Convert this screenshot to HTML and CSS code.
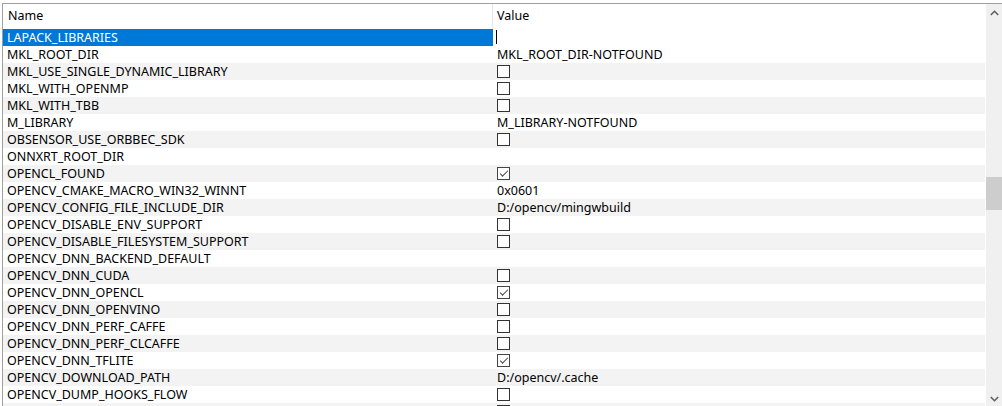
FILE: index.html
```html
<!DOCTYPE html>
<html>
<head>
<meta charset="utf-8">
<link rel="stylesheet" href="styles.css">
</head>
<body>
<div class="frame">
  <div class="table">
    <div class="header">
      <div class="hname">Name</div>
      <div class="hvalue">Value</div>
    </div>
    <div class="rows">
      <div class="row sel"><div class="name">LAPACK_LIBRARIES</div><div class="value"><span class="caret"></span></div></div>
      <div class="row"><div class="name">MKL_ROOT_DIR</div><div class="value">MKL_ROOT_DIR-NOTFOUND</div></div>
      <div class="row alt"><div class="name">MKL_USE_SINGLE_DYNAMIC_LIBRARY</div><div class="value"><span class="cb"></span></div></div>
      <div class="row"><div class="name">MKL_WITH_OPENMP</div><div class="value"><span class="cb"></span></div></div>
      <div class="row alt"><div class="name">MKL_WITH_TBB</div><div class="value"><span class="cb"></span></div></div>
      <div class="row"><div class="name">M_LIBRARY</div><div class="value">M_LIBRARY-NOTFOUND</div></div>
      <div class="row alt"><div class="name">OBSENSOR_USE_ORBBEC_SDK</div><div class="value"><span class="cb"></span></div></div>
      <div class="row"><div class="name">ONNXRT_ROOT_DIR</div><div class="value"></div></div>
      <div class="row alt"><div class="name">OPENCL_FOUND</div><div class="value"><span class="cb on"></span></div></div>
      <div class="row"><div class="name">OPENCV_CMAKE_MACRO_WIN32_WINNT</div><div class="value">0x0601</div></div>
      <div class="row alt"><div class="name">OPENCV_CONFIG_FILE_INCLUDE_DIR</div><div class="value">D:/opencv/mingwbuild</div></div>
      <div class="row"><div class="name">OPENCV_DISABLE_ENV_SUPPORT</div><div class="value"><span class="cb"></span></div></div>
      <div class="row alt"><div class="name">OPENCV_DISABLE_FILESYSTEM_SUPPORT</div><div class="value"><span class="cb"></span></div></div>
      <div class="row"><div class="name">OPENCV_DNN_BACKEND_DEFAULT</div><div class="value"></div></div>
      <div class="row alt"><div class="name">OPENCV_DNN_CUDA</div><div class="value"><span class="cb"></span></div></div>
      <div class="row"><div class="name">OPENCV_DNN_OPENCL</div><div class="value"><span class="cb on"></span></div></div>
      <div class="row alt"><div class="name">OPENCV_DNN_OPENVINO</div><div class="value"><span class="cb"></span></div></div>
      <div class="row"><div class="name">OPENCV_DNN_PERF_CAFFE</div><div class="value"><span class="cb"></span></div></div>
      <div class="row alt"><div class="name">OPENCV_DNN_PERF_CLCAFFE</div><div class="value"><span class="cb"></span></div></div>
      <div class="row"><div class="name">OPENCV_DNN_TFLITE</div><div class="value"><span class="cb on"></span></div></div>
      <div class="row alt"><div class="name">OPENCV_DOWNLOAD_PATH</div><div class="value">D:/opencv/.cache</div></div>
      <div class="row"><div class="name">OPENCV_DUMP_HOOKS_FLOW</div><div class="value"><span class="cb"></span></div></div>
      <div class="row alt"><div class="name"></div><div class="value"><span class="cb"></span></div></div>
    </div>
  </div>
  <div class="scrollbar">
    <div class="arrow">
      <svg width="9" height="6" viewBox="0 0 9 6"><path d="M0.8 5 L4.5 1.3 L8.2 5" fill="none" stroke="#606060" stroke-width="1.6"/></svg>
    </div>
    <div class="track">
      <div class="thumb"></div>
    </div>
    <div class="arrow">
      <svg width="9" height="6" viewBox="0 0 9 6"><path d="M0.8 1 L4.5 4.7 L8.2 1" fill="none" stroke="#606060" stroke-width="1.6"/></svg>
    </div>
  </div>
</div>
</body>
</html>
```
FILE: styles.css
```css
html, body {
  margin: 0;
  padding: 0;
  background: #ffffff;
  overflow: hidden;
}
body {
  width: 1002px;
  height: 406px;
  font-family: "Noto Sans", "Open Sans", sans-serif;
  font-size: 12.5px;
  color: #000;
}
.frame {
  margin: 3px 0 0 2px;
  height: 403px;
  border-top: 1px solid #a0a0a0;
  border-left: 1px solid #a0a0a0;
  display: flex;
  overflow: hidden;
}
.table {
  flex: 1;
  display: flex;
  flex-direction: column;
  overflow: hidden;
}
.header {
  height: 25px;
  display: flex;
  flex-shrink: 0;
}
.hname {
  width: 490px;
  padding-left: 5px;
  line-height: 24px;
  border-right: 1px solid #e5e5e5;
  box-sizing: border-box;
}
.hvalue {
  padding-left: 4px;
  line-height: 24px;
}
.row {
  height: 17px;
  display: flex;
  flex-shrink: 0;
  line-height: 17px;
}
.row.alt {
  background: #f3f3f3;
}
.name {
  width: 490px;
  padding-left: 4px;
  box-sizing: border-box;
  white-space: nowrap;
}
.value {
  padding-left: 4px;
  white-space: nowrap;
  position: relative;
}
.row.sel .name {
  background: #0078d7;
  color: #fff;
}
.caret {
  display: block;
  width: 1px;
  height: 14px;
  background: #000;
  margin: 1px 0 0 -1px;
}
.cb {
  display: block;
  width: 11px;
  height: 11px;
  border: 1px solid #333;
  background: #fff;
  margin-top: 2px;
  position: relative;
}
.cb.on {
  border-color: #444;
}
.cb.on::after {
  content: "";
  position: absolute;
  left: 2px;
  top: 1px;
  width: 7px;
  height: 3px;
  border-left: 1.6px solid #444;
  border-bottom: 1.6px solid #444;
  transform: translate(0px, 1.5px) rotate(-45deg);
}
.scrollbar {
  width: 16px;
  background: #f0f0f0;
  display: flex;
  flex-direction: column;
  flex-shrink: 0;
  margin-left: 1px;
}
.arrow {
  height: 17px;
  display: flex;
  align-items: center;
  justify-content: center;
}
.track {
  flex: 1;
  position: relative;
}
.thumb {
  position: absolute;
  left: 0;
  right: 0;
  top: 156px;
  height: 33px;
  background: #cdcdcd;
}
```
